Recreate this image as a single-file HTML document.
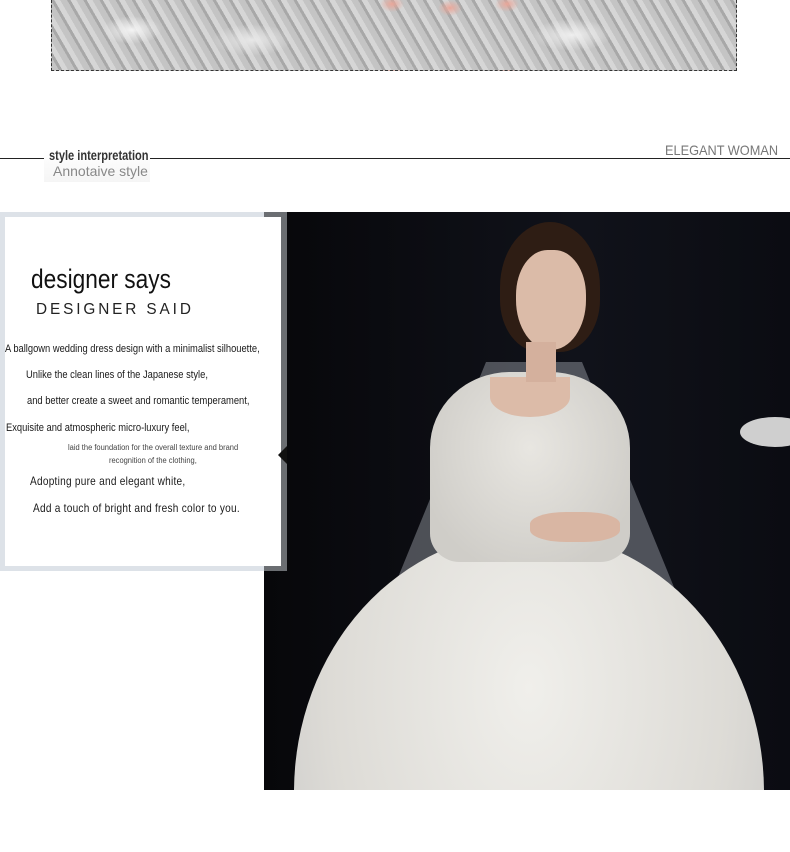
<!DOCTYPE html>
<html><head><meta charset="utf-8"><style>
*{margin:0;padding:0;box-sizing:border-box}
html,body{width:790px;height:852px;overflow:hidden}
body{background:#fff;position:relative;font-family:"Liberation Sans",sans-serif}
.a{position:absolute}
.n{color:#1a1a1a;white-space:nowrap;transform-origin:0 0}
</style></head><body>
<div class="a" style="left:51px;top:0;width:686px;height:71px;border:1px dashed #333;border-top:none;background:
radial-gradient(ellipse 30px 14px at 80px 30px,#f4f4f4,transparent),
radial-gradient(ellipse 40px 16px at 200px 40px,#e8e8e8,transparent),
radial-gradient(ellipse 40px 16px at 520px 35px,#efefef,transparent),
radial-gradient(ellipse 12px 8px at 340px 4px,#e9a79a,transparent),
radial-gradient(ellipse 12px 8px at 398px 8px,#e9a79a,transparent),
radial-gradient(ellipse 12px 8px at 455px 4px,#e9a79a,transparent),
repeating-linear-gradient(60deg,#c4c4c4 0 6px,#a8a8a8 6px 9px,#d6d6d6 9px 14px),#b0b0b0"></div>
<div class="a" style="left:0;top:158px;width:790px;height:1px;background:#222"></div>
<div class="a" style="left:44px;top:150px;width:106px;height:32px;background:linear-gradient(#fff,#f5f5f5)"></div>
<div class="a n" style="left:49px;top:147px;font-size:14px;font-weight:bold;color:#333;transform:scaleX(.79)">style interpretation</div>
<div class="a" style="left:53px;top:163px;font-size:14px;color:#888">Annotaive style</div>
<div class="a n" style="left:665px;top:142px;font-size:14px;color:#777;transform:scaleX(.91)">ELEGANT WOMAN</div>

<div class="a" style="left:264px;top:212px;width:526px;height:578px;overflow:hidden;background:linear-gradient(90deg,#07070a,#10121a 60%,#0b0c12)">
 <div class="a" style="left:30px;top:150px;width:480px;height:470px;clip-path:polygon(40% 0,60% 0,100% 100%,0 100%);background:rgba(200,205,215,.35)"></div>
 <div class="a" style="left:30px;top:320px;width:470px;height:520px;border-radius:50% 50% 0 0;background:radial-gradient(ellipse at 50% 30%,#f0efeb,#dddbd6 60%,#c4c4c4)"></div>
 <div class="a" style="left:166px;top:160px;width:200px;height:190px;border-radius:40% 40% 15% 15%;background:radial-gradient(ellipse at 50% 40%,#e8e6e1,#cfcdc8 80%)"></div>
 <div class="a" style="left:226px;top:165px;width:80px;height:40px;border-radius:0 0 50% 50%;background:#dcbba8"></div>
 <div class="a" style="left:266px;top:300px;width:90px;height:30px;border-radius:40%;background:#d9b6a3"></div>
 <div class="a" style="left:236px;top:10px;width:100px;height:130px;border-radius:50% 50% 40% 40%;background:#2e1d14"></div>
 <div class="a" style="left:252px;top:38px;width:70px;height:100px;border-radius:45% 45% 50% 50%;background:#dbbba8"></div>
 <div class="a" style="left:262px;top:130px;width:30px;height:40px;background:#d4b09d"></div>
 <div class="a" style="left:476px;top:205px;width:70px;height:30px;border-radius:50%;background:#cfcfcf"></div>
</div>

<div class="a" style="left:0;top:212px;width:287px;height:359px;background:#dde2e8"></div>
<div class="a" style="left:264px;top:212px;width:23px;height:359px;background:#6b6e72"></div>
<div class="a" style="left:5px;top:217px;width:276px;height:349px;background:#fff"></div>
<div class="a n" style="left:31px;top:264px;font-size:27px;color:#111;transform:scaleX(.84)">designer says</div>
<div class="a" style="left:36px;top:301px;font-size:16px;letter-spacing:3px;color:#222;transform:scaleX(.96);transform-origin:0 0;white-space:nowrap">DESIGNER SAID</div>
<div class="a n" style="left:5px;top:343px;font-size:11px;transform:scaleX(.85)">A ballgown wedding dress design with a minimalist silhouette,</div>
<div class="a n" style="left:26px;top:369px;font-size:11px;transform:scaleX(.85)">Unlike the clean lines of the Japanese style,</div>
<div class="a n" style="left:27px;top:395px;font-size:11px;transform:scaleX(.85)">and better create a sweet and romantic temperament,</div>
<div class="a n" style="left:6px;top:422px;font-size:11px;transform:scaleX(.85)">Exquisite and atmospheric micro-luxury feel,</div>
<div class="a n" style="left:68px;top:443px;font-size:8px;color:#444;transform:scaleX(.94)">laid the foundation for the overall texture and brand</div>
<div class="a n" style="left:109px;top:456px;font-size:8px;color:#444;transform:scaleX(.94)">recognition of the clothing,</div>
<div class="a n" style="left:30px;top:474px;font-size:12px;letter-spacing:.3px;transform:scaleX(.84)">Adopting pure and elegant white,</div>
<div class="a n" style="left:33px;top:501px;font-size:12px;letter-spacing:.3px;transform:scaleX(.84)">Add a touch of bright and fresh color to you.</div>
<div class="a" style="left:278px;top:446px;width:0;height:0;border-top:9px solid transparent;border-bottom:9px solid transparent;border-right:9px solid #111"></div>
</body></html>
